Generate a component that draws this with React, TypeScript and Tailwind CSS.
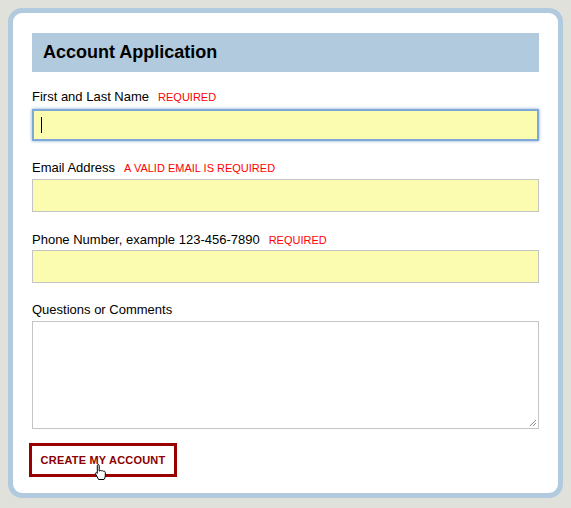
export default function App() {
  const f = { fontFamily: '"Liberation Sans", Arial, sans-serif' };
  const lbl = "text-[13px] text-black leading-[16px] h-[16px] flex items-end";
  const req = "text-[11px] text-[#ff0000] ml-[9px]";
  return (
    <div style={f} className="w-[571px] h-[508px] bg-[#e1e1db] pt-[8px] pl-[8px]">
      <div className="w-[555px] h-[490px] border-[5px] border-[#b1cadd] rounded-[14px] bg-white pt-[20px] px-[19px]">
        <div className="h-[39px] bg-[#b1cadd] flex items-center pl-[11px] text-[18px] font-bold text-black">Account Application</div>
        <div className={lbl + " mt-[17px]"}>First and Last Name<span className={req}>REQUIRED</span></div>
        <div className="mt-[4px] h-[32px] bg-[#fcfcb0] border-2 border-[#7fa8d6] shadow-[0_0_3px_#7fa8d6] flex items-center pl-[7px]">
          <div className="w-px h-[16px] bg-black" />
        </div>
        <div className={lbl + " mt-[19px]"}>Email Address<span className={req}>A VALID EMAIL IS REQUIRED</span></div>
        <div className="mt-[3px] h-[33px] bg-[#fcfcb0] border border-[#c4c4c4]" />
        <div className={lbl + " mt-[20px]"}>Phone Number, example 123-456-7890<span className={req}>REQUIRED</span></div>
        <div className="mt-[2px] h-[33px] bg-[#fcfcb0] border border-[#c4c4c4]" />
        <div className={lbl + " mt-[19px]"}>Questions or Comments</div>
        <div className="mt-[3px] h-[108px] bg-white border border-[#c4c4c4] relative">
          <svg className="absolute right-[1px] bottom-[1px]" width="8" height="8" viewBox="0 0 8 8"><path d="M7 1L1 7M7 4L4 7" stroke="#888" strokeWidth="1" /></svg>
        </div>
        <div className="mt-[14px] -ml-[3px] relative">
          <button style={f} className="w-[148px] h-[34px] border-[3px] border-[#990000] bg-white text-[11px] font-bold text-[#8b0000] tracking-[0.2px]">CREATE MY ACCOUNT</button>
          <svg className="absolute left-[65px] top-[20px]" width="14" height="18" viewBox="0 0 14 18">
            <path d="M4 1.5c.8 0 1.2.5 1.2 1.2V8l.6-.1c.5-.6 1.6-.6 2 .1.6-.5 1.6-.3 1.9.4.7-.3 1.6.1 1.6.9v3.6c0 1.6-.6 2.6-1.3 3.6H4.6L1.6 11c-.5-.8.3-1.7 1.1-1.2l.6.6V2.7c0-.7.4-1.2.7-1.2z" fill="white" stroke="black" strokeWidth="1" strokeLinejoin="round" />
          </svg>
        </div>
      </div>
    </div>
  );
}
